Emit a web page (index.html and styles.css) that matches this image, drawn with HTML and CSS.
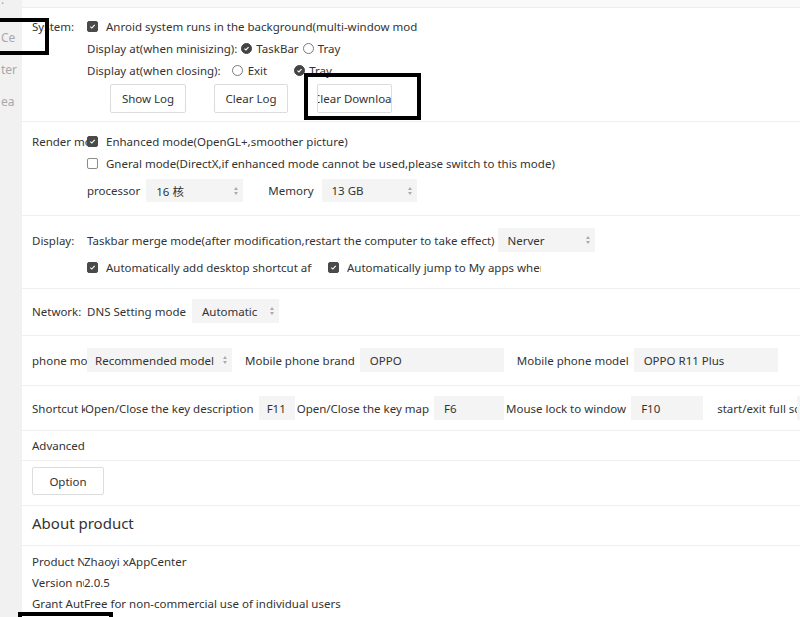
FILE: index.html
```html
<!DOCTYPE html>
<html>
<head>
<meta charset="utf-8">
<link rel="stylesheet" href="styles.css">
</head>
<body>
<div class="app">
  <aside class="sidebar">
    <div class="side-item side-top">·</div>
    <div class="side-item">Ce</div>
    <div class="side-item">ter</div>
    <div class="side-item">ea</div>
  </aside>
  <main class="main">
    <div class="top-strip"></div>

    <section class="sec sec-system">
      <div class="row">
        <span class="label">System:</span>
        <span class="cb on"><svg viewBox="0 0 11 11"><path d="M2.8 5.6 L4.7 7.4 L8.2 3.6" /></svg></span>
        <span class="clip w-sys">Anroid system runs in the background(multi-window mode)</span>
      </div>
      <div class="row indent">
        <span>Display at(when minisizing):</span>
        <span class="radio on r1"><svg viewBox="0 0 11 11"><path d="M3 5.6 L4.8 7.3 L8 3.8" /></svg></span>
        <span>TaskBar</span>
        <span class="radio r2"></span>
        <span>Tray</span>
      </div>
      <div class="row indent">
        <span>Display at(when closing):</span>
        <span class="radio r3"></span>
        <span>Exit</span>
        <span class="radio on r4"><svg viewBox="0 0 11 11"><path d="M3 5.6 L4.8 7.3 L8 3.8" /></svg></span>
        <span>Tray</span>
      </div>
      <div class="btn-row">
        <button class="btn b-show">Show Log</button>
        <button class="btn b-clear">Clear Log</button>
        <button class="btn b-dl"><span class="dl-text">Clear Download</span></button>
      </div>
    </section>

    <section class="sec sec-render">
      <div class="row">
        <span class="label">Render mode</span>
        <span class="cb on"><svg viewBox="0 0 11 11"><path d="M2.8 5.6 L4.7 7.4 L8.2 3.6" /></svg></span>
        <span>Enhanced mode(OpenGL+,smoother picture)</span>
      </div>
      <div class="row indent">
        <span class="cb"></span>
        <span>Gneral mode(DirectX,if enhanced mode cannot be used,please switch to this mode)</span>
      </div>
      <div class="row indent sel-row">
        <span>processor</span>
        <span class="select s-proc">16 核<i class="arr"></i></span>
        <span class="mem-label">Memory</span>
        <span class="select s-mem">13 GB<i class="arr"></i></span>
      </div>
    </section>

    <section class="sec sec-display">
      <div class="row">
        <span class="label">Display:</span>
        <span>Taskbar merge mode(after modification,restart the computer to take effect)</span>
        <span class="select s-nerver">Nerver<i class="arr"></i></span>
      </div>
      <div class="row indent row-auto">
        <span class="cb on"><svg viewBox="0 0 11 11"><path d="M2.8 5.6 L4.7 7.4 L8.2 3.6" /></svg></span>
        <span class="clip w-auto1">Automatically add desktop shortcut after installation</span>
        <span class="cb on cb-second"><svg viewBox="0 0 11 11"><path d="M2.8 5.6 L4.7 7.4 L8.2 3.6" /></svg></span>
        <span class="clip w-auto2">Automatically jump to My apps when installing</span>
      </div>
    </section>

    <section class="sec sec-network">
      <div class="row">
        <span class="label">Network:</span>
        <span>DNS Setting mode</span>
        <span class="select s-auto">Automatic<i class="arr"></i></span>
      </div>
    </section>

    <section class="sec sec-phone">
      <div class="row">
        <span class="label">phone model</span>
        <span class="select s-rec">Recommended model<i class="arr"></i></span>
        <span class="ph-label">Mobile phone brand</span>
        <span class="input i-brand">OPPO</span>
        <span class="ph-label">Mobile phone model</span>
        <span class="input i-model">OPPO R11 Plus</span>
      </div>
    </section>

    <section class="sec sec-short">
      <div class="row">
        <span class="label sc-lab">Shortcut key</span>
        <span class="sc-first">Open/Close the key description</span>
        <span class="input i-f11">F11</span>
        <span class="sc-label">Open/Close the key map</span>
        <span class="input i-f6">F6</span>
        <span class="sc-label">Mouse lock to window</span>
        <span class="input i-f10">F10</span>
        <span class="sc-label sc-last">start/exit full screen</span>
        <span class="input i-full">F12</span>
      </div>
    </section>

    <section class="sec sec-adv">
      <div class="row"><span>Advanced</span></div>
    </section>

    <section class="sec sec-opt">
      <button class="btn b-opt">Option</button>
    </section>

    <section class="sec sec-about">
      <h2 class="about-title">About product</h2>
    </section>

    <section class="sec-info">
      <div class="row info"><span class="label">Product Name</span><span>Zhaoyi xAppCenter</span></div>
      <div class="row info"><span class="label">Version number</span><span>2.0.5</span></div>
      <div class="row info"><span class="label">Grant Authorization</span><span>Free for non-commercial use of individual users</span></div>
    </section>
  </main>
</div>

<div class="mark mark-1"></div>
<div class="mark mark-2"></div>
<div class="mark mark-3"></div>
</body>
</html>
```

FILE: styles.css
```css
* { box-sizing: border-box; }
html, body {
  margin: 0;
  padding: 0;
  width: 800px;
  height: 617px;
  overflow: hidden;
  background: #ffffff;
}
body {
  font-family: "Noto Sans", "Open Sans", "Noto Sans CJK SC", sans-serif;
  font-size: 11.5px;
  color: #333333;
  position: relative;
}
.app {
  display: flex;
  height: 617px;
}
.sidebar {
  width: 22px;
  flex: none;
  background: #f1f1f1;
  color: #a8a8a8;
  font-size: 12px;
  overflow: hidden;
}
.side-item {
  height: 32px;
  line-height: 32px;
  white-space: nowrap;
  padding-left: 1px;
}
.side-top {
  height: 22px;
  line-height: 8px;
}
.main {
  flex: 1;
  overflow: hidden;
  white-space: nowrap;
  padding-left: 10px;
  position: relative;
}
.top-strip {
  height: 8px;
  margin-left: -10px;
  background: #f9f9f9;
  border-bottom: 1px solid #eeeeee;
}
.sec {
  border-bottom: 1px solid #efefef;
  margin-left: -10px;
  padding-left: 10px;
}
.row {
  display: flex;
  align-items: center;
  height: 22px;
}
.row > * { flex: none; }
.label {
  width: 55px;
  overflow: hidden;
  white-space: nowrap;
}
.indent { padding-left: 55px; }
.clip {
  overflow: hidden;
  white-space: nowrap;
  display: inline-block;
}
.w-sys { width: 311px; }
.w-auto1 { width: 206px; }
.w-auto2 { width: 194px; }

/* checkbox */
.cb {
  width: 11px;
  height: 11px;
  border-radius: 2px;
  border: 1px solid #8a8a8a;
  background: #fff;
  margin-right: 8px;
  display: inline-flex;
}
.cb.on {
  background: #4a4a4a;
  border-color: #4a4a4a;
}
.cb svg, .radio svg {
  width: 100%;
  height: 100%;
  fill: none;
  stroke: #ffffff;
  stroke-width: 1.4;
}
.cb-second { margin-left: 16px; }

/* radio */
.radio {
  width: 11px;
  height: 11px;
  border-radius: 50%;
  border: 1px solid #7a7a7a;
  background: #fff;
  display: inline-flex;
  margin-right: 4px;
}
.radio.on {
  background: #444444;
  border-color: #444444;
}
.r1 { margin-left: 4px; }
.r2 { margin-left: 4px; }
.r3 { margin-left: 11px; margin-right: 5px; }
.r4 { margin-left: 27px; }

/* system */
.sec-system { padding-top: 7px; padding-bottom: 8px; }
.btn-row {
  display: flex;
  padding-left: 78px;
  margin-top: 3px;
  gap: 28px;
}
.btn {
  font-family: inherit;
  font-size: 11.5px;
  color: #333;
  background: #fff;
  border: 1px solid #dcdcdc;
  border-radius: 2px;
  height: 29px;
  padding: 0;
  cursor: default;
}
.b-show { width: 76px; }
.b-clear { width: 74px; }
.b-dl {
  width: 75px;
  overflow: hidden;
  white-space: nowrap;
  text-align: left;
  margin-left: 1px;
}
.dl-text {
  display: inline-block;
  margin-left: -5px;
}

/* render */
.sec-render { padding-top: 8px; padding-bottom: 13px; }
.sel-row { height: 23px; margin-top: 5px; }
.select {
  position: relative;
  display: inline-flex;
  align-items: center;
  height: 23px;
  background: #f4f4f4;
  padding-left: 10px;
}
.arr {
  position: absolute;
  right: 4px;
  top: 50%;
  margin-top: -4px;
  width: 5px;
  height: 8px;
}
.arr::before, .arr::after {
  content: "";
  position: absolute;
  left: 0;
  border-left: 2.5px solid transparent;
  border-right: 2.5px solid transparent;
}
.arr::before { top: 0; border-bottom: 3px solid #aaaaaa; }
.arr::after { bottom: 0; border-top: 3px solid #aaaaaa; }
.s-proc { width: 97px; margin-left: 6px; }
.mem-label { margin-left: 25px; }
.s-mem { width: 95px; margin-left: 8px; }

/* display */
.sec-display { padding-top: 12px; padding-bottom: 10px; }
.sec-display .row:first-child { height: 24px; }
.s-nerver { width: 97px; height: 24px; margin-left: 3px; }
.row-auto { margin-top: 4px; }

/* network */
.sec-network { padding-top: 10px; padding-bottom: 12px; }
.sec-network .row { height: 24px; }
.s-auto { width: 87px; height: 24px; margin-left: 6px; }

/* phone */
.sec-phone { padding-top: 12px; padding-bottom: 13px; }
.sec-phone .row { height: 24px; }
.s-rec { width: 145px; height: 24px; padding-left: 8px; }
.ph-label { margin-left: 13px; margin-right: 5px; }
.input {
  display: inline-flex;
  align-items: center;
  height: 24px;
  background: #f4f4f4;
  padding-left: 10px;
  overflow: hidden;
}
.i-brand { width: 144px; }
.i-model { width: 144px; }

/* shortcut */
.sec-short { padding-top: 10px; padding-bottom: 10px; }
.sec-short .row { height: 24px; }
.sc-lab { width: 53px; }
.sc-first { margin-right: 5px; }
.i-f11 { width: 36px; padding-left: 8px; }
.sc-label { margin-left: 2px; margin-right: 5px; }
.i-f6 { width: 70px; }
.i-f10 { width: 72px; }
.sc-last { margin-left: 14px; margin-right: 0; width: 80px; overflow: hidden; }
.i-full { width: 60px; }

/* advanced */
.sec-adv { padding-top: 3px; padding-bottom: 4px; }
.sec-opt { padding-top: 6px; padding-bottom: 10px; }
.b-opt { width: 72px; height: 28px; }

/* about */
.sec-about { padding-top: 5px; padding-bottom: 10px; }
.about-title {
  margin: 0;
  font-size: 15px;
  font-weight: normal;
  line-height: 24px;
  color: #333;
}
.sec-info { padding-top: 5px; }
.info { height: 21px; }
.info .label { width: 52px; }

/* annotation marks */
.mark {
  position: absolute;
  border: 4px solid #000000;
}
.mark-1 { left: -10px; top: 18px; width: 59px; height: 37px; }
.mark-2 { left: 304px; top: 73px; width: 117px; height: 47px; }
.mark-3 { left: 18px; top: 612px; width: 95px; height: 20px; }
```
